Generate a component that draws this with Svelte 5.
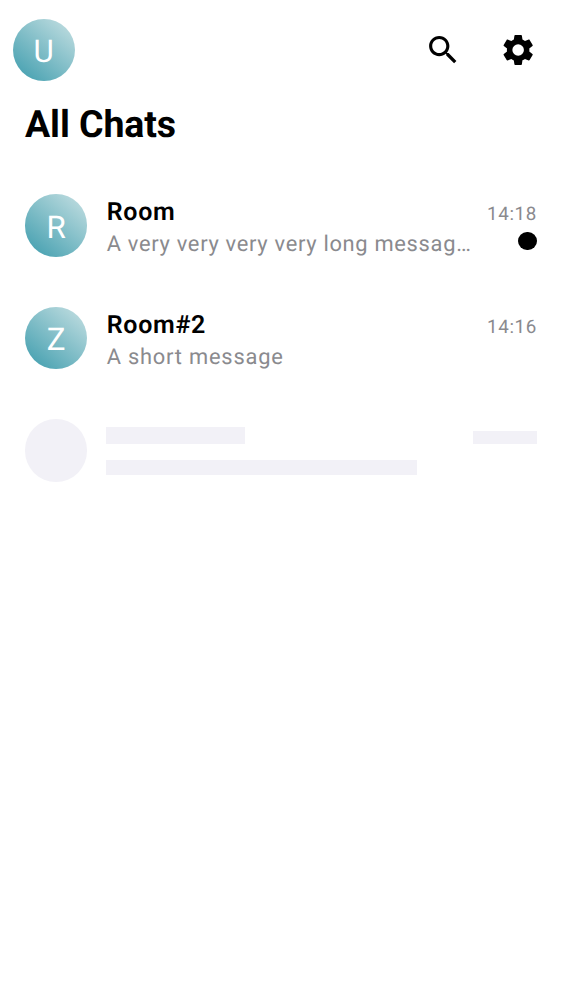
<script>
  const chats = [
    { initial: 'R', name: 'Room', message: 'A very very very very long messag…', time: '14:18', unread: true },
    { initial: 'Z', name: 'Room#2', message: 'A short message', time: '14:16', unread: false }
  ];
</script>

<main>
  <header>
    <div class="avatar">U</div>
    <nav>
      <button aria-label="Search">
        <svg viewBox="-0.25 -0.15 24 24"><path d="M15.5 14h-.79l-.28-.27C15.41 12.59 16 11.11 16 9.5 16 5.91 13.09 3 9.5 3S3 5.91 3 9.5 5.91 16 9.5 16c1.61 0 3.09-.59 4.23-1.57l.27.28v.79l5 4.99L20.49 19l-4.99-5zm-6 0C7.01 14 5 11.99 5 9.5S7.01 5 9.5 5 14 7.01 14 9.5 11.99 14 9.5 14z" /></svg>
      </button>
      <button aria-label="Settings">
        <svg viewBox="-0.25 -0.15 24 24"><path d="M19.14 12.94c.04-.3.06-.61.06-.94 0-.32-.02-.64-.07-.94l2.03-1.58c.18-.14.23-.41.12-.61l-1.92-3.32c-.12-.22-.37-.29-.59-.22l-2.39.96c-.5-.38-1.03-.7-1.62-.94l-.36-2.54c-.04-.24-.24-.41-.48-.41h-3.84c-.24 0-.43.17-.47.41l-.36 2.54c-.59.24-1.13.57-1.62.94l-2.39-.96c-.22-.08-.47 0-.59.22L2.74 8.87c-.12.21-.08.47.12.61l2.03 1.58c-.05.3-.09.63-.09.94s.02.64.07.94l-2.03 1.58c-.18.14-.23.41-.12.61l1.92 3.32c.12.22.37.29.59.22l2.39-.96c.5.38 1.03.7 1.62.94l.36 2.54c.05.24.24.41.48.41h3.84c.24 0 .44-.17.47-.41l.36-2.54c.59-.24 1.13-.56 1.62-.94l2.39.96c.22.08.47 0 .59-.22l1.92-3.32c.12-.22.07-.47-.12-.61l-2.01-1.58zM12 15.7A3.7 3.7 0 1 1 12 8.3a3.7 3.7 0 0 1 0 7.4z" /></svg>
      </button>
    </nav>
  </header>

  <h1>All Chats</h1>

  <section>
    {#each chats as chat}
      <article class:unread={chat.unread}>
        <div class="avatar">{chat.initial}</div>
        <div class="body">
          <h2>{chat.name}</h2>
          <p>{chat.message}</p>
        </div>
        <div class="meta">
          <time>{chat.time}</time>
          {#if chat.unread}<span class="dot"></span>{/if}
        </div>
      </article>
    {/each}
    <article>
      <div class="avatar blank"></div>
      <div class="body skeleton">
        <div class="bar name"></div>
        <div class="bar message"></div>
      </div>
      <div class="bar time"></div>
    </article>
  </section>
</main>

<style>
  :global(body) { margin: 0; background: #fff; }
  main { min-height: 1000px; overflow: hidden; font-family: Roboto, sans-serif; color: #000; background: #fff; text-rendering: geometricPrecision; }
  header { height: 100px; box-sizing: border-box; display: flex; align-items: center; justify-content: space-between; padding: 0 6.4px 0 12.5px; }
  nav { display: flex; }
  button { width: 75px; height: 75px; padding: 0; border: 0; background: none; display: grid; place-items: center; }
  svg { width: 37.5px; height: 37.5px; display: block; fill: #000; }
  .avatar { width: 62.5px; height: 62.5px; flex: none; border-radius: 50%; display: flex; align-items: center; justify-content: center; box-sizing: border-box; padding-top: 3px; color: #fff; font-size: 31.25px; line-height: 37px; background: linear-gradient(40deg, #45a0b0 7%, #badade 90%); }
  article .avatar { margin-left: -0.2px; }
  .avatar.blank { background: #f2f1f7; }
  h1 { margin: 0; padding: 0 25px; height: 69.4px; line-height: 51px; font-size: 37.5px; font-weight: 700; letter-spacing: -0.1px; box-sizing: border-box; }
  article { height: 112.5px; box-sizing: border-box; padding: 25px 25px 0; display: flex; align-items: flex-start; }
  .body { flex: 1; min-width: 0; padding: 1px 0 0 19.4px; }
  h2 { margin: 0; font-size: 25px; font-weight: 600; line-height: 36px; letter-spacing: 0.7px; }
  p { margin: 0; font-size: 21.875px; line-height: 28px; letter-spacing: 0.79px; color: #8a8a8e; white-space: nowrap; }
  .unread p { letter-spacing: 0.7px; }
  .meta { width: 64px; flex: none; display: flex; flex-direction: column; align-items: flex-end; padding-top: 8px; }
  time { font-size: 18.75px; line-height: 24px; letter-spacing: 0.65px; color: #8a8a8e; }
  .dot { width: 18.75px; height: 18.75px; border-radius: 50%; background: #000; margin-top: 5.3px; }
  .bar { background: #f2f1f7; }
  .body.skeleton { padding: 8px 0 0 18.9px; }
  .bar.name { width: 139px; height: 17px; }
  .bar.message { width: 311px; height: 15px; margin-top: 16px; }
  .bar.time { width: 64px; height: 13px; margin-top: 12px; flex: none; }
</style>
